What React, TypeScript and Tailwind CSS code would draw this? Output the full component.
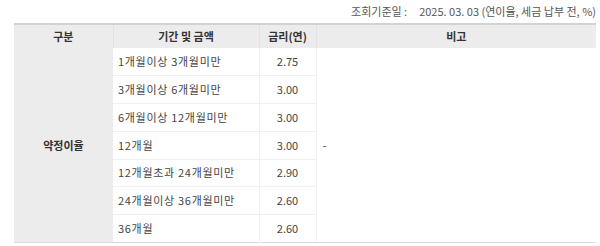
import React from 'react';

const rows = [
  { term: '1개월이상 3개월미만', rate: '2.75', h: 'h-[27px]' },
  { term: '3개월이상 6개월미만', rate: '3.00', h: 'h-[28px]' },
  { term: '6개월이상 12개월미만', rate: '3.00', h: 'h-[28px]' },
  { term: '12개월', rate: '3.00', h: 'h-[28px]' },
  { term: '12개월초과 24개월미만', rate: '2.90', h: 'h-[27px]' },
  { term: '24개월이상 36개월미만', rate: '2.60', h: 'h-[28px]' },
  { term: '36개월', rate: '2.60', h: 'h-[28px]' },
];

export default function App() {
  return (
    <div className="w-[600px] h-[246px] bg-white font-['Noto_Sans_CJK_KR',sans-serif] text-[11px] text-[#444] overflow-hidden">
      <div className="flex justify-end items-center h-[23px] pr-[4px] text-[#555]">
        <span className="mr-[12px]">조회기준일 :</span>
        <span>2025. 03. 03 (연이율, 세금 납부 전, %)</span>
      </div>
      <table className="ml-[14px] w-[582px] border-collapse table-fixed">
        <colgroup>
          <col className="w-[99px]" />
          <col className="w-[146px]" />
          <col className="w-[57px]" />
          <col className="w-[280px]" />
        </colgroup>
        <thead>
          <tr className="h-[24px] bg-[#ececec] border-t-2 border-[#d2d2d2] text-[#333]">
            <th className="border-r border-[#e2e2e2] font-bold">구분</th>
            <th className="border-r border-[#e2e2e2] font-bold">기간 및 금액</th>
            <th className="border-r border-[#e2e2e2] font-bold">금리(연)</th>
            <th className="font-bold">비고</th>
          </tr>
        </thead>
        <tbody>
          {rows.map((r, i) => (
            <tr key={i} className={`${r.h} border-b ${i === rows.length - 1 ? 'border-[#dcdcdc]' : 'border-[#f0f0f0]'}`}>
              {i === 0 && (
                <td rowSpan={7} className="bg-[#ececec] text-center font-bold text-[#333] border-b border-[#dcdcdc]">
                  약정이율
                </td>
              )}
              <td className="pl-[5px] tracking-[0.7px] border-r border-[#f0f0f0]">{r.term}</td>
              <td className="text-center border-r border-[#f0f0f0]">{r.rate}</td>
              {i === 0 && (
                <td rowSpan={7} className="pl-[6px] align-middle border-b border-[#dcdcdc]">-</td>
              )}
            </tr>
          ))}
        </tbody>
      </table>
    </div>
  );
}
